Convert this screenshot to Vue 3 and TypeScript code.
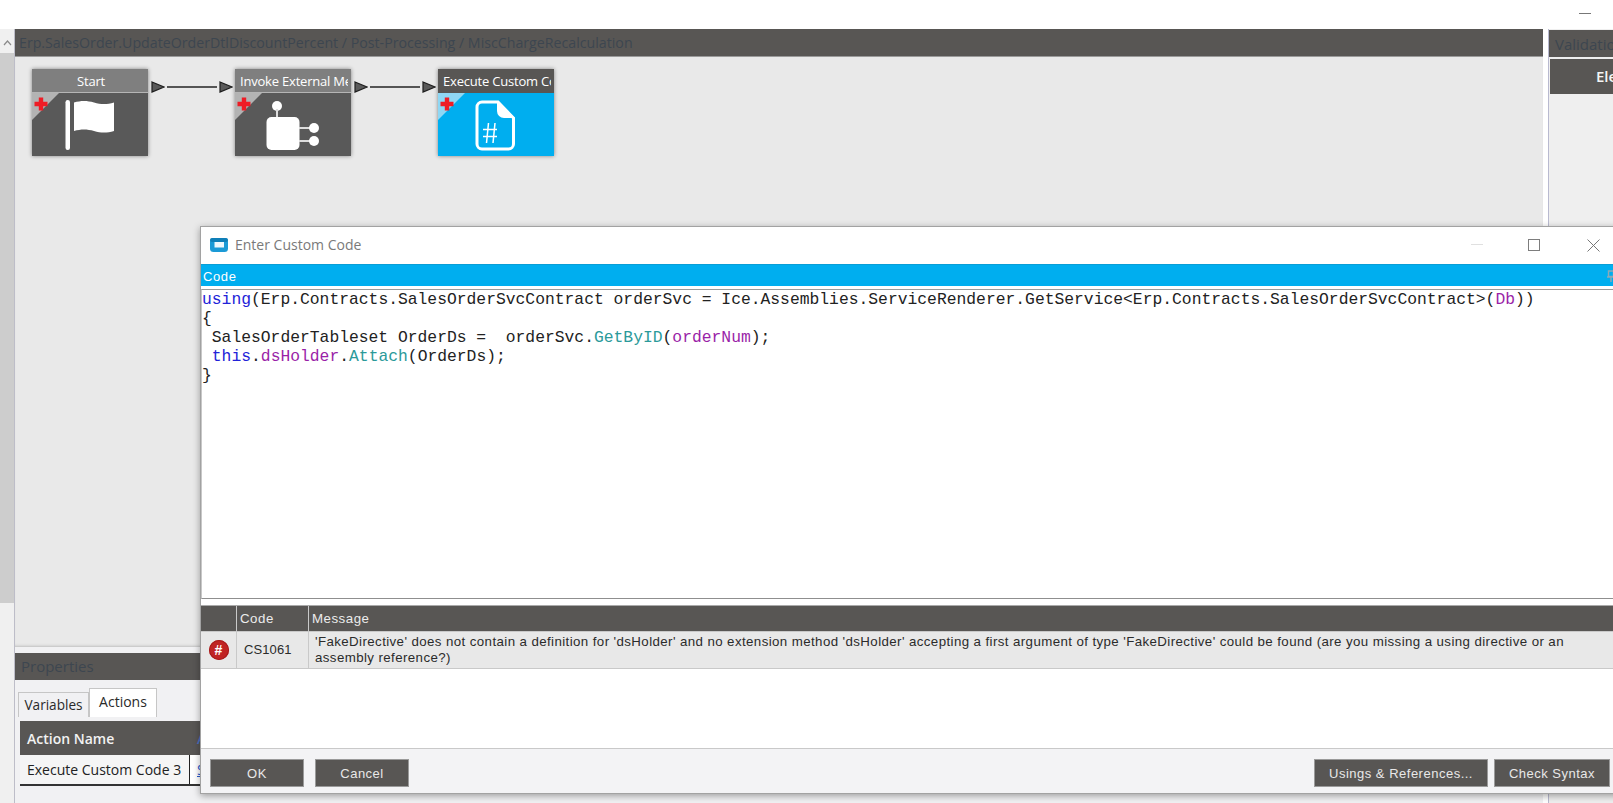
<script setup lang="ts">
interface FlowNode {
  title: string
  icon: 'flag' | 'invoke' | 'code'
  active?: boolean
}
const nodes: FlowNode[] = [
  { title: 'Start', icon: 'flag' },
  { title: 'Invoke External Method', icon: 'invoke' },
  { title: 'Execute Custom Code', icon: 'code', active: true },
]
</script>

<template>
  <div class="page">
    <div class="topbar"><span class="top-min"></span></div>
    <div class="workspace">
      <div class="scroll">
        <svg class="scroll-arrow" width="9" height="6" viewBox="0 0 9 6"><path d="M1 5l3.500-4L8 5" fill="none" stroke="#8a8a8a" stroke-width="1.200" /></svg>
        <div class="scroll-thumb"></div>
      </div>
      <div class="main">
        <div class="panel-head path">Erp.SalesOrder.UpdateOrderDtlDiscountPercent / Post-Processing / MiscChargeRecalculation</div>
        <div class="canvas">
          <template v-for="(n, i) in nodes" :key="n.title">
            <div class="node" :class="{ active: n.active }">
              <div class="node-title"><span>{{ n.title }}</span></div>
              <div class="node-body">
                <span class="corner"></span>
                <svg class="plus" width="14" height="14" viewBox="0 0 14 14"><path d="M4.800.500h4.400v4.300h4.300v4.400H9.200v4.300H4.800V9.200H.500V4.800h4.300z" fill="#ee1c25" /></svg>
                <svg v-if="n.icon === 'flag'" class="ico" width="116" height="63" viewBox="0 0 116 63">
                  <rect x="33.500" y="7" width="4.500" height="50" rx="2.200" fill="#fff" />
                  <path d="M42 9.500c7-2 13-2 20 0s13 2 20 0v28.500c-7 2-13 2-20 0s-13-2-20 0z" fill="#fff" />
                </svg>
                <svg v-else-if="n.icon === 'invoke'" class="ico" width="116" height="63" viewBox="0 0 116 63">
                  <circle cx="42" cy="13" r="5" fill="#fff" />
                  <rect x="41" y="16" width="2" height="10" fill="#ddd" />
                  <rect x="31.500" y="24" width="33" height="33" rx="5" fill="#fff" />
                  <rect x="64" y="34" width="11" height="2" fill="#ddd" />
                  <rect x="64" y="47" width="11" height="2" fill="#ddd" />
                  <circle cx="79" cy="35" r="5" fill="#fff" />
                  <circle cx="79" cy="48" r="5" fill="#fff" />
                </svg>
                <svg v-else class="ico" width="116" height="63" viewBox="0 0 116 63">
                  <path d="M44 9h16l15.500 16v26a5 5 0 0 1-5 5H44a5 5 0 0 1-5-5V14a5 5 0 0 1 5-5z" fill="none" stroke="#fff" stroke-width="3" />
                  <path d="M59 8v10a7 7 0 0 0 7 7h11z" fill="#fff" />
                  <path d="M50.500 30l-2 20M57 30l-2 20M45 36.500h14M45 43.500h14" fill="none" stroke="#fff" stroke-width="1.500" />
                </svg>
              </div>
            </div>
            <div v-if="i < nodes.length - 1" class="link">
              <svg class="port" width="14" height="12" viewBox="0 0 14 12"><path d="M1 1l12 5-12 5z" fill="#5a5a5a" stroke="#1e1e1e" stroke-width="1.200" /></svg>
              <span class="wire"></span>
              <svg class="port" width="14" height="12" viewBox="0 0 14 12"><path d="M1 1l12 5-12 5z" fill="#5a5a5a" stroke="#1e1e1e" stroke-width="1.200" /></svg>
            </div>
          </template>
        </div>
        <div class="strip"></div>
        <div class="panel-head props">Properties</div>
        <div class="props-body">
          <div class="tabs">
            <div class="tab">Variables</div>
            <div class="tab on">Actions</div>
          </div>
          <div class="table">
            <div class="t-head">
              <div class="t-col1">Action Name</div>
              <div class="t-col2">A</div>
            </div>
            <div class="t-row">
              <div class="t-col1">Execute Custom Code 3</div>
              <div class="t-col2 link-text">S</div>
            </div>
          </div>
        </div>
      </div>
      <div class="side">
        <div class="panel-head side-head">Validation</div>
        <div class="side-col">Element</div>
      </div>
    </div>

    <section class="dialog">
      <header class="d-title">
        <svg class="d-icon" width="18" height="14" viewBox="0 0 18 14">
          <rect x="0" y="0" width="18" height="14" rx="3.500" fill="#1b9ad6" />
          <rect x="0" y="0" width="18" height="4" rx="2" fill="#0f7fb8" />
          <rect x="4.500" y="4" width="9.500" height="5.500" fill="#eef8fd" />
        </svg>
        <span class="d-text">Enter Custom Code</span>
        <span class="w-min"></span>
        <span class="w-max"></span>
        <svg class="w-close" width="13" height="13" viewBox="0 0 13 13"><path d="M.5.500l12 12M12.500.500l-12 12" stroke="#777" fill="none" /></svg>
      </header>
      <div class="d-bar">
        Code
        <svg class="pin" width="8" height="12" viewBox="0 0 8 12"><path d="M1.500 1h5v5.500h-5zM0 7h8M4 7v5" fill="none" stroke="#8fa9b5" stroke-width="1.400" /></svg>
      </div>
      <div class="editor">
        <div class="cl"><b class="kw">using</b>(Erp.Contracts.SalesOrderSvcContract orderSvc = Ice.Assemblies.ServiceRenderer.GetService&lt;Erp.Contracts.SalesOrderSvcContract&gt;(<b class="var">Db</b>))</div>
        <div class="cl">{</div>
        <div class="cl">&nbsp;SalesOrderTableset OrderDs =&nbsp; orderSvc.<b class="fn">GetByID</b>(<b class="var">orderNum</b>);</div>
        <div class="cl">&nbsp;<b class="kw">this</b>.<b class="var">dsHolder</b>.<b class="fn">Attach</b>(OrderDs);</div>
        <div class="cl">}</div>
      </div>
      <div class="grid">
        <div class="g-row g-head">
          <div class="g-a"></div>
          <div class="g-b">Code</div>
          <div class="g-c">Message</div>
        </div>
        <div class="g-row g-data">
          <div class="g-a"><span class="err">#</span></div>
          <div class="g-b code-val">CS1061</div>
          <div class="g-c msg">'FakeDirective' does not contain a definition for 'dsHolder' and no extension method 'dsHolder' accepting a first argument of type 'FakeDirective' could be found (are you missing a using directive or an assembly reference?)</div>
        </div>
      </div>
      <footer class="d-foot">
        <button class="btn small">OK</button>
        <button class="btn small">Cancel</button>
        <span class="grow"></span>
        <button class="btn usings">Usings &amp; References...</button>
        <button class="btn check">Check Syntax</button>
      </footer>
    </section>
  </div>
</template>

<style>
html, body { margin: 0; background: #fff; }
</style>

<style scoped>
.page {
  position: relative;
  width: 1613px;
  height: 803px;
  overflow: hidden;
  display: flex;
  flex-direction: column;
  background: #fff;
  font-family: "Open Sans", "Noto Sans", sans-serif;
}
.topbar {
  height: 29px;
  flex: none;
  display: flex;
  justify-content: flex-end;
  padding: 13px 22px 0 0;
  box-sizing: border-box;
}
.top-min { width: 12px; height: 1px; background: #777; }
.workspace { flex: 1; display: flex; min-height: 0; }
.scroll {
  width: 15px;
  box-sizing: border-box;
  flex: none;
  background: #f0f0f0;
  border-right: 1px solid #bdbdc8;
  display: flex;
  flex-direction: column;
  align-items: center;
}
.scroll-arrow { margin-top: 11px; }
.scroll-thumb { width: 100%; height: 550px; margin-top: 7px; background: #cdcdcd; }
.main {
  width: 1528px;
  flex: none;
  display: flex;
  flex-direction: column;
  background: #f1f1f3;
}
.panel-head {
  background: #585654;
  color: #3d4650;
  font-size: 14.200px;
  height: 27px;
  line-height: 27px;
  box-sizing: content-box;
  flex: none;
  white-space: nowrap;
  overflow: hidden;
}
.path { padding-left: 4px; border-bottom: 1px solid #9a9a9a; }
.canvas {
  height: 590px;
  flex: none;
  background: #e9e9e9;
  box-sizing: border-box;
  padding: 12px 0 0 17px;
  display: flex;
  align-items: flex-start;
  box-shadow: inset 0 -3px 3px -2px #bdbdbd;
}
.node {
  width: 116px;
  height: 87px;
  flex: none;
  display: flex;
  flex-direction: column;
  box-shadow: 0 0 4px rgba(0, 0, 0, .45);
  background: #595959;
}
.node-title {
  height: 24px;
  flex: none;
  background: #7f7f7f;
  border-bottom: 1px solid #b5b5b5;
  box-sizing: border-box;
  color: #fff;
  font-size: 13px;
  line-height: 25px;
  text-align: center;
  overflow: hidden;
  white-space: nowrap;
  padding: 0 3px 0 5px;
  letter-spacing: -.2px;
}
.node-title span { display: block; overflow: hidden; }
.node-body { position: relative; flex: 1; }
.corner {
  position: absolute;
  left: 0;
  top: 0;
  width: 27px;
  height: 27px;
  background: #b3b3b3;
  clip-path: polygon(0 0, 100% 0, 0 100%);
}
.plus { position: absolute; left: 1.500px; top: 3.500px; }
.ico { position: absolute; left: 0; top: 0; }
.active { background: #00aeef; }
.active .node-title { background: #585654; border-bottom-color: #585654; }
.active .node-body { background: #00aeef; }
.active .corner { background: #8fd7f4; }
.link {
  width: 87px;
  flex: none;
  display: flex;
  align-items: center;
  height: 12px;
  margin-top: 12px;
  padding: 0 2px 0 3px;
  box-sizing: border-box;
}
.port { flex: none; }
.wire { flex: 1; height: 1.500px; background: #555; margin: 0 2px; }
.strip { height: 6px; flex: none; background: #f1f1f3; }
.props { padding-left: 6px; font-size: 15px; }
.props-body { flex: 1; padding: 8px 0 0 3px; position: relative; }
.tabs { display: flex; align-items: flex-end; height: 29px; }
.tab {
  width: 71px;
  height: 25px;
  box-sizing: border-box;
  border: 1px solid #c6c6c6;
  border-bottom: none;
  background: #f1f1f3;
  color: #2a2a2a;
  font-size: 13.600px;
  line-height: 23px;
  text-align: center;
}
.tab.on {
  width: 68px;
  height: 29px;
  background: #fff;
  font-size: 14px;
  line-height: 26px;
}
.table { margin-top: 4px; margin-left: 2px; }
.t-head, .t-row { display: flex; }
.t-head {
  height: 34px;
  background: #585654;
  color: #f2f2f2;
  font-size: 14px;
  line-height: 36px;
  font-weight: 600;
}
.t-head .t-col2 { color: #4a70c0; }
.t-row {
  height: 31px;
  box-sizing: border-box;
  background: #fff;
  border-bottom: 2px solid #333;
  color: #222;
  font-size: 14px;
  line-height: 29px;
}
.t-col1 { width: 170px; padding-left: 7px; box-sizing: border-box; flex: none; }
.t-row .t-col1 { border-right: 1px solid #222; background: #f5f5f5; }
.t-col2 { padding-left: 7px; width: 200px; }
.link-text { color: #2a5bd0; text-decoration: underline; }
.side {
  flex: 1;
  margin-left: 5px;
  border-left: 1px solid #b9bad0;
  background: #efefef;
  display: flex;
  flex-direction: column;
  padding-top: 1px;
}
.side-head { padding-left: 6px; font-size: 15px; line-height: 28px; }
.side-col {
  margin: 2px 0 0 1px;
  height: 35px;
  background: #585654;
  color: #f5f5f5;
  font-size: 15px;
  font-weight: 600;
  line-height: 34px;
  padding-left: 46px;
  white-space: nowrap;
  overflow: hidden;
}
.dialog {
  position: absolute;
  left: 200px;
  top: 226px;
  width: 1440px;
  height: 568px;
  box-sizing: border-box;
  border: 1px solid #a2a2a2;
  background: #fff;
  box-shadow: 0 2px 7px rgba(0, 0, 0, .35);
  display: flex;
  flex-direction: column;
}
.d-title {
  position: relative;
  height: 37px;
  flex: none;
  display: flex;
  align-items: center;
  padding: 0 0 2px 9px;
  box-sizing: border-box;
}
.d-icon { flex: none; }
.d-text { margin-left: 7px; font-size: 14px; color: #7a7a7a; }
.w-min { position: absolute; left: 1270px; top: 17px; width: 12px; height: 1px; background: #e0e0e0; }
.w-max { position: absolute; left: 1327px; top: 12px; width: 12px; height: 12px; box-sizing: border-box; border: 1px solid #7d7d7d; }
.w-close { position: absolute; left: 1386px; top: 12px; }
.d-bar {
  position: relative;
  height: 22px;
  flex: none;
  background: #00aeef;
  color: #fff;
  font-family: "Liberation Sans", Arial, sans-serif;
  font-size: 13px;
  line-height: 23px;
  padding-left: 2px;
  letter-spacing: .6px;
  border-top: 1px solid #0a9ed6;
  box-sizing: border-box;
}
.pin { position: absolute; left: 1406px; top: 5px; }
.editor {
  height: 310px;
  flex: none;
  margin-top: 3px;
  box-sizing: border-box;
  border-top: 1px solid #9a9a9a;
  border-bottom: 1px solid #8f8f8f;
  border-left: 1px solid #c8c8c8;
  font-family: "Liberation Mono", "Courier New", monospace;
  font-size: 16.330px;
  line-height: 19.500px;
  color: #222;
  background: #fff;
}
.cl { white-space: pre; height: 19px; }
.cl b { font-weight: 400; }
.kw { color: #2222d8; }
.var { color: #9a1fa8; }
.fn { color: #2b9a9a; }
.grid { margin-top: 6px; font-family: "Liberation Sans", Arial, sans-serif; flex: none; }
.g-row { display: flex; }
.g-a { width: 36px; flex: none; box-sizing: border-box; border-right: 1px solid #c9c9c9; display: flex; align-items: center; justify-content: center; }
.g-b { width: 72px; flex: none; box-sizing: border-box; border-right: 1px solid #c9c9c9; }
.g-c { flex: 1; }
.g-head {
  height: 25px;
  background: #585654;
  color: #ececec;
  font-size: 13.300px;
  line-height: 25px;
  letter-spacing: .5px;
  border-top: 1px solid #aaa;
  box-sizing: content-box;
}
.g-head .g-b, .g-head .g-c { padding-left: 3px; }
.g-data {
  height: 38px;
  box-sizing: border-box;
  background: #e8e8e8;
  border-top: 1px solid #c9c9c9;
  border-bottom: 1px solid #c9c9c9;
  font-size: 13.300px;
  color: #2b2b2b;
}
.code-val { padding: 0 0 0 7px; line-height: 36px; font-size: 13px; letter-spacing: .1px; }
.msg { flex: none; width: 1295px; padding: 2px 20px 0 6px; line-height: 16px; letter-spacing: .4px; box-sizing: border-box; }
.err {
  width: 20px;
  height: 20px;
  border-radius: 50%;
  background: #c02424;
  box-shadow: inset 0 0 0 1px #a81c1c;
  color: #fff;
  font-weight: 700;
  font-size: 14px;
  line-height: 20px;
  text-align: center;
}
.d-foot {
  margin-top: auto;
  height: 45px;
  flex: none;
  box-sizing: border-box;
  border-top: 1px solid #c9c9c9;
  background: #f3f3f5;
  display: flex;
  align-items: flex-start;
  padding: 10px 0 0 9px;
  width: 1412px;
}
.grow { flex: 1; }
.btn {
  height: 28px;
  box-sizing: border-box;
  border: 1px solid #9a9a9a;
  background: #585654;
  color: #e8e8e8;
  font-family: "Liberation Sans", Arial, sans-serif;
  font-size: 13px;
  letter-spacing: .5px;
  padding: 0;
  flex: none;
}
.small { width: 94px; margin-right: 11px; }
.usings { width: 174px; margin-right: 6px; }
.check { width: 116px; margin-right: 3px; }
</style>
